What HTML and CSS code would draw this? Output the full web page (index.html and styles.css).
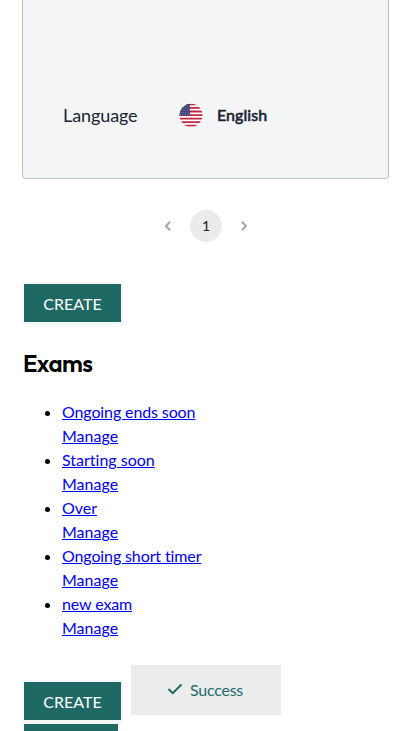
FILE: index.html
```html
<!DOCTYPE html>
<html lang="en">
<head>
<meta charset="utf-8">
<title>Exams</title>
<link rel="stylesheet" href="styles.css">
</head>
<body>
<main class="page">
  <section class="card">
    <span class="label">Language</span>
    <svg class="flag" viewBox="0 0 24 24" aria-hidden="true">
      <defs><clipPath id="round"><circle cx="12" cy="12.3" r="11.5"/></clipPath></defs>
      <g clip-path="url(#round)">
        <path fill="#fff" d="M0 0h24v24H0z"/>
        <path stroke="#bf2640" stroke-width="1.8" d="M0 1.4h24M0 4.95h24M0 8.5h24M0 12.05h24M0 15.6h24M0 19.15h24M0 22.7h24"/>
        <path fill="#414377" d="M0 0h11v12.8H0z"/>
        <path stroke="#aaaac7" stroke-width=".8" stroke-dasharray=".8 1.5" d="M1 3h10M2 5.2h9M1 7.4h10M2 9.6h9M1 11.6h10"/>
      </g>
    </svg>
    <span class="language">English</span>
  </section>
  <nav class="pagination">
    <svg class="arrow" viewBox="0 0 20 20"><path d="M12.1 5.8 8 10l4.1 4.2"/></svg>
    <span class="current">1</span>
    <svg class="arrow" viewBox="0 0 20 20"><path d="M7.9 5.8 12 10l-4.1 4.2"/></svg>
  </nav>
  <button class="button">CREATE</button>
  <h2 class="heading">Exams</h2>
  <ul class="exams">
    <li><a class="exam" href="#">Ongoing ends soon</a><br><a href="#">Manage</a></li>
    <li><a href="#">Starting soon</a><br><a href="#">Manage</a></li>
    <li><a href="#">Over</a><br><a href="#">Manage</a></li>
    <li><a class="exam" href="#">Ongoing short timer</a><br><a href="#">Manage</a></li>
    <li><a class="exam" href="#">new exam</a><br><a href="#">Manage</a></li>
  </ul>
  <button class="button">CREATE</button>
  <button class="button next" aria-label="More"></button>
</main>
<div class="toast" role="status">
  <svg class="check" viewBox="0 0 16 16"><path d="m1.5 7 4.2 4.2 8.8-8.7"/></svg>
  <span class="message">Success</span>
</div>
</body>
</html>
```
FILE: styles.css
```css
* { box-sizing: border-box; }
body {
  margin: 0;
  height: 731px;
  overflow: hidden;
  background: #fff;
  color: #000;
  font: 16px/24px Lato, sans-serif;
  font-variant-ligatures: none;
}
.page { padding: 0 22px; }
.card {
  display: flex;
  align-items: center;
  height: 179px;
  padding: 52px 40px 0;
  border: 1px solid #b9c0c9;
  border-top: 0;
  border-radius: 0 0 4px 4px;
  background: #f4f5f7;
  color: #1a2333;
}
.label { width: 116px; font-size: 18px; letter-spacing: -.1px; }
.flag { width: 24px; height: 24px; margin-right: 14px; }
.language { -webkit-text-stroke: .6px #1a2333; letter-spacing: .07px; }
.pagination {
  display: flex;
  justify-content: center;
  align-items: center;
  gap: 12px;
  height: 32px;
  margin: 31px 0 40px;
}
.current {
  width: 32px;
  height: 32px;
  padding-left: 1px;
  border-radius: 50%;
  background: #ebebeb;
  color: #212121;
  font-size: 14px;
  line-height: 32px;
  text-align: center;
}
.arrow { width: 20px; height: 20px; fill: none; stroke: #a6a6a6; stroke-width: 2; }
.button {
  display: block;
  width: 101px;
  height: 42px;
  padding: 1px 0 0;
  border: 2px solid #f4f7f7;
  border-radius: 0;
  background: #1f6964;
  color: #fff;
  font: 16px/24px Lato, sans-serif;
}
.heading {
  margin: 23px 0 21px 1px;
  font: 650 24px/32px Outfit, "Josefin Sans", Lato, sans-serif;
  letter-spacing: -.6px;
}
.exams { margin: 0 0 40px; padding-left: 40px; }
.exams a { color: #00e; text-decoration: underline; }
.exams .exam { letter-spacing: -.12px; }
.next { width: 98px; }
.toast {
  position: absolute;
  left: 131px;
  top: 665px;
  display: flex;
  align-items: center;
  justify-content: center;
  gap: 7px;
  width: 150px;
  height: 50px;
  padding-right: 2px;
  background: #ebeced;
  color: #1f6964;
}
.check { width: 16px; height: 16px; fill: none; stroke: #1f6964; stroke-width: 2; }
.message { letter-spacing: -.25px; }
```
